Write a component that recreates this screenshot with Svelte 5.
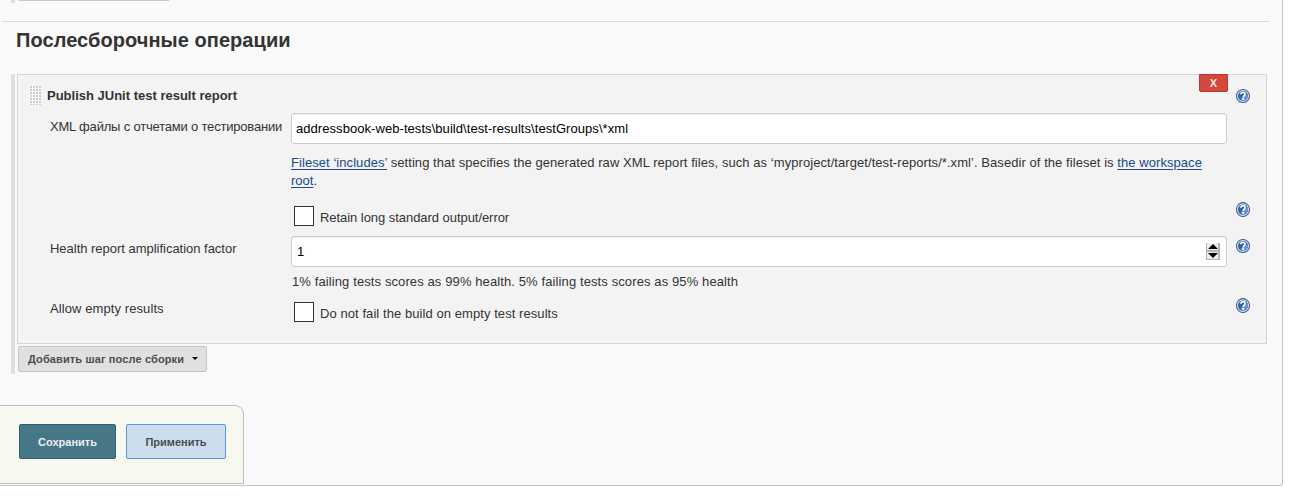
<script>
  let pattern = $state('addressbook-web-tests\\build\\test-results\\testGroups\\*xml');
  let factor = $state('1');
</script>

{#snippet help(height)}
  <svg class="help" width="14" {height} viewBox="0 0 14 14" preserveAspectRatio="none" aria-hidden="true">
    <circle cx="7" cy="7" r="6.5" fill="#e3ecf7" stroke="#3f66a3" stroke-width="1.100" />
    <circle cx="7" cy="7" r="5" fill="#3561a3" />
    <path d="M7 12a5 5 0 0 0 4.900-6C10 5.500 8 7.500 4.500 9.500z" fill="#6a92cb" />
    <path d="M4.900 5.300C5 2.700 9.100 2.700 9.100 5.200C9.100 6.700 7.200 6.700 7.200 8.500" fill="none" stroke="#fff" stroke-width="1.700" />
    <rect x="6.200" y="9.300" width="1.900" height="1.700" fill="#fff" />
  </svg>
{/snippet}

<main class="panel">
  <div class="previous"><i class="bar"></i><i class="edge"></i></div>
  <h1><span>Послесборочные операции</span></h1>

  <section class="steps">
    <article class="card">
      <header>
        <i class="grip"></i>
        <strong>Publish JUnit test result report</strong>
        <button class="delete">X</button>
        {@render help(14)}
      </header>
      <div class="row files">
        <span class="label"><span class="l-files">XML файлы с отчетами о тестировании</span></span>
        <input class="text" type="text" bind:value={pattern} />
      </div>
      <p class="desc">
        <span class="line1"><a href="#includes">Fileset ‘includes’</a> setting that specifies the generated raw XML report files, such as ‘myproject/target/test-reports/*.xml’. Basedir of the fileset is <a href="#workspace">the workspace</a></span><br /><a href="#workspace">root</a>.
      </p>
      <div class="row retain">
        <span></span>
        <label class="check"><i class="box"></i><span class="c-retain">Retain long standard output/error</span></label>
        {@render help(15)}
      </div>
      <div class="row health">
        <span class="label"><span class="l-health">Health report amplification factor</span></span>
        <div class="text number">
          <input type="text" bind:value={factor} />
          <svg width="14" height="17" viewBox="0 0 14 17" aria-hidden="true">
            <rect width="14" height="17" fill="#b5b5b5" />
            <path d="M1 0h11v7H1zM1 9h11v7H1z" fill="#ececec" />
            <path d="M7 1L12 6H2zM2 10H12L7 15z" fill="#000" />
          </svg>
        </div>
        {@render help(14)}
      </div>
      <p class="hint"><span>1% failing tests scores as 99% health. 5% failing tests scores as 95% health</span></p>
      <div class="row empty">
        <span class="label"><span class="l-empty">Allow empty results</span></span>
        <label class="check"><i class="box"></i><span class="c-empty">Do not fail the build on empty test results</span></label>
        {@render help(15)}
      </div>
    </article>
    <button class="add"><span>Добавить шаг после сборки</span><i class="caret"></i></button>
  </section>

  <footer>
    <button class="save"><span>Сохранить</span></button>
    <button class="apply"><span>Применить</span></button>
  </footer>
</main>

<style>
  :global(body) { background: #fff; overflow: hidden; }
  * { box-sizing: border-box; }
  .panel {
    width: 1283px; height: 486px; background: #f9f9f9;
    border-right: 1px solid #c5c5c5; border-bottom: 1px solid #c5c5c5;
    border-bottom-right-radius: 3px;
    font: 13px/18px "Liberation Sans", Arial, sans-serif; color: #333;
    overflow: hidden; display: flex; flex-direction: column;
  }
  button, input { font-family: inherit; margin: 0; }
  .previous { height: 21px; margin-left: 11px; display: flex; gap: 4px; flex: none; }
  .bar { width: 4px; height: 3px; background: #dfdfdf; }
  .edge { width: 150px; height: 1px; background: #c9c9c9; }
  h1 {
    margin: 0 0 0 2px; width: 1267px; height: 53px; flex: none; border-top: 1px solid #dadada;
    padding: 6px 0 0 14px; font-size: 20px; line-height: 24px; letter-spacing: 0.06px;
  }
  .steps { margin-left: 11px; width: 1256px; height: 300px; flex: none; border-left: 4px solid #dfdfdf; padding-left: 2px; }
  .card { width: 1250px; height: 270px; border: 1px solid #d5d5d5; background: #f3f3f3; }
  header { height: 38px; display: flex; padding-left: 11px; }
  .grip {
    width: 12px; height: 19px; margin: 11px 6px 0 0;
    background: repeating-linear-gradient(90deg, #fcfcfc 0 1px, transparent 1px 3px), repeating-linear-gradient(#cdcdcd 0 2px, #f3f3f3 2px 3px);
  }
  strong { width: 1152px; padding-top: 12px; font-size: 13px; }
  .delete {
    width: 29px; height: 18px; margin-top: -1px; border: 1px solid #bd362f; border-radius: 0 0 2px 2px;
    background: #d24939; color: #f4e8e6; font-weight: bold; font-size: 11px; line-height: 16px; padding: 0;
  }
  .help { display: block; flex: none; margin-left: 8px; }
  header .help { margin-top: 14px; }
  .row { display: grid; grid-template-columns: 241px 936px 23px; padding-left: 32px; }
  .row .help { margin-left: 9px; }
  .label { white-space: nowrap; }
  .files { height: 40px; }
  .files .label { padding-top: 5px; }
  .l-files { letter-spacing: -0.19px; }
  .l-health { letter-spacing: -0.02px; }
  .l-empty { letter-spacing: 0.09px; }
  .c-retain { letter-spacing: -0.05px; }
  .c-empty { letter-spacing: 0.07px; }
  .text {
    width: 936px; height: 31px; border: 1px solid #ccc; border-radius: 3px; background: #fff;
    box-shadow: inset 0 1px 1px #0001; padding: 0 4px; font-size: 13px; color: #000; outline: 0;
  }
  .files .text { letter-spacing: 0.06px; }
  .desc { margin: 0 0 0 273px; padding-top: 1px; height: 49px; white-space: nowrap; }
  .line1 { letter-spacing: 0.062px; }
  a { color: #204a87; text-decoration: underline; text-underline-offset: 2px; }
  .retain { height: 34px; }
  .check { display: flex; gap: 6px; padding-left: 3px; white-space: nowrap; }
  .box { width: 20px; height: 20px; border: 1px solid #333; background: #fff; }
  .check span { padding-top: 3px; }
  .retain .check { padding-top: 4px; }
  .health { height: 37px; }
  .health .label { padding-top: 4px; }
  .health .help { margin-top: 3px; }
  .number { display: flex; align-items: center; padding: 0 6px 0 5px; }
  .number input { flex: 1; border: 0; padding: 0; background: none; font-size: 13px; color: #000; outline: 0; }
  .hint { margin: 0 0 0 274px; height: 25px; letter-spacing: 0.108px; }
  .empty { height: 46px; }
  .empty .label { padding-top: 2px; }
  .empty .check { padding-top: 4px; }
  .add {
    display: flex; align-items: center; width: 189px; height: 26px; margin: 2px 0 0 1px; padding: 0 0 0 9px;
    border: 1px solid #c5c5c5; border-radius: 2px; background: #e0e0e0; color: #4d4d4d; font-size: 11px; font-weight: bold; white-space: nowrap;
  }
  .add span { width: 163px; text-align: left; letter-spacing: 0.12px; }
  .caret { border: 3px solid transparent; border-top-color: #000; border-bottom: 0; margin: -1px 0 0 1px; }
  footer {
    width: 244px; height: 79px; margin-top: 31px; flex: none; border: 1px solid #abc9bb; border-left: 0;
    border-top-right-radius: 9px; background: #f7f9f0; padding: 18px 0 0 19px; display: flex; gap: 10px;
  }
  footer button { height: 35px; padding: 0; border-radius: 2px; font-size: 11px; font-weight: bold; }
  .save { width: 97px; border: 1px solid #315e70; background: #457787; color: #eee; }
  .apply { width: 100px; border: 1px solid #5b97d5; background: #ccdded; color: #4d4d4d; }
</style>
